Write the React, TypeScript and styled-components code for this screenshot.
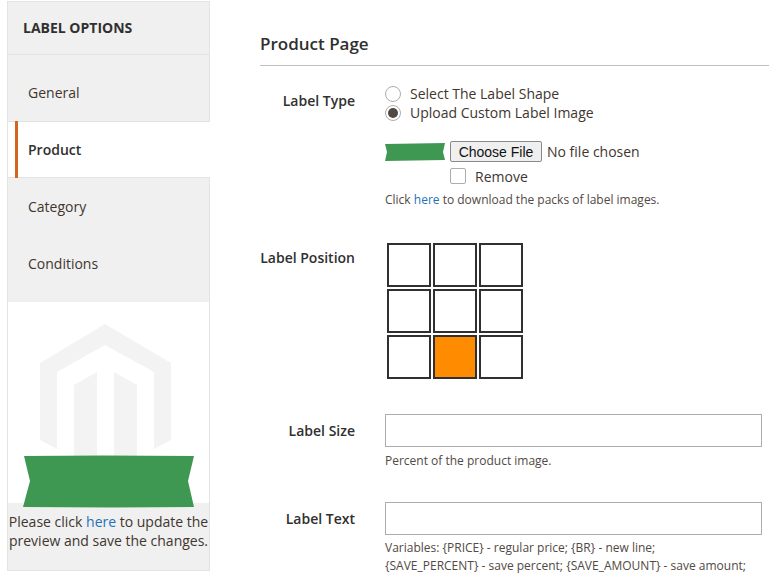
import React from 'react';
import styled, { createGlobalStyle } from 'styled-components';

const GlobalStyle = createGlobalStyle`
html, body {
    margin: 0;
    padding: 0;
    background: #fff;
    overflow: hidden;
}
body {
    font-family: "Open Sans", "Liberation Sans", sans-serif;
    font-size: 14px;
    color: #41362f;
}
`;

const Page = styled.div`
display: flex;
align-items: flex-start;
width: 769px;
height: 575px;
overflow: hidden;
padding: 1px 0 0 7px;
box-sizing: border-box;
`;

const Sidebar = styled.aside`
position: relative;
width: 203px;
height: 570px;
flex: none;
box-sizing: border-box;
border: 1px solid #e3e3e3;
display: flex;
flex-direction: column;
background: #fff;
`;

const SidebarTitle = styled.div`
height: 53px;
flex: none;
box-sizing: border-box;
padding: 0 0 2px 15px;
display: flex;
align-items: center;
background: #f0f0f0;
border-bottom: 1px solid #e3e3e3;
font-weight: 700;
font-size: 14px;
color: #303030;
text-transform: uppercase;
`;

const NavList = styled.nav`
display: flex;
flex-direction: column;
padding: 9px 0;
background: #f0f0f0;
height: 247px;
box-sizing: border-box;
flex: none;
`;

const NavItem = styled.div<{ $active?: boolean }>`
position: relative;
height: 57px;
flex: none;
box-sizing: border-box;
display: flex;
align-items: center;
padding-left: 20px;
font-size: 14px;
font-weight: ${p => (p.$active ? 600 : 400)};
color: ${p => (p.$active ? '#303030' : '#41362f')};
background: ${p => (p.$active ? '#fff' : 'transparent')};
border-top: ${p => (p.$active ? '1px solid #e3e3e3' : 'none')};
border-bottom: ${p => (p.$active ? '1px solid #e3e3e3' : 'none')};
margin-right: ${p => (p.$active ? '-1px' : '0')};
&::before {
    content: "";
    display: ${p => (p.$active ? 'block' : 'none')};
    position: absolute;
    left: 7px;
    top: -1px;
    bottom: -1px;
    width: 3px;
    background: #d0661f;
}
`;

const Preview = styled.div`
flex: 1;
display: flex;
flex-direction: column;
`;

const PreviewImage = styled.div`
height: 201px;
flex: none;
box-sizing: border-box;
padding: 22px 0 0 32px;
background: #fff;
`;

const LogoMark = styled.svg`
display: block;
width: 131px;
height: 132px;
`;

const Ribbon = styled.svg`
position: absolute;
left: 15px;
top: 453px;
width: 172px;
height: 53px;
`;

const PreviewNote = styled.div`
flex: 1;
background: #f0f0f0;
padding-top: 9px;
text-align: center;
font-size: 14px;
line-height: 19px;
color: #41362f;
white-space: nowrap;
`;

const Link = styled.a`
color: #1f72b8;
text-decoration: none;
`;

const Main = styled.main`
width: 509px;
margin-left: 50px;
flex: none;
display: flex;
flex-direction: column;
`;

const SectionTitle = styled.h2`
margin: 0;
height: 65px;
box-sizing: border-box;
padding-top: 33px;
border-bottom: 1px solid #c4c1bb;
font-size: 17px;
line-height: 20px;
font-weight: 600;
color: #303030;
flex: none;
`;

const FormRow = styled.div<{ $top: number }>`
display: grid;
grid-template-columns: 95px 377px;
column-gap: 30px;
margin-top: ${p => p.$top}px;
`;

const FieldLabel = styled.label<{ $pad: number }>`
text-align: right;
font-weight: 600;
font-size: 14px;
line-height: 19px;
color: #303030;
padding-top: ${p => p.$pad}px;
white-space: nowrap;
`;

const Field = styled.div`
display: flex;
flex-direction: column;
min-width: 0;
`;

const RadioLine = styled.label`
display: flex;
align-items: center;
height: 19px;
font-size: 14px;
color: #41362f;
`;

const Radio = styled.input.attrs({ type: 'radio' })`
appearance: none;
width: 16px;
height: 16px;
margin: 0 9px 0 0;
border: 1px solid #adadad;
border-radius: 50%;
background: #fff;
box-sizing: border-box;
position: relative;
&:checked::after {
    content: "";
    position: absolute;
    left: 2px;
    top: 2px;
    width: 10px;
    height: 10px;
    border-radius: 50%;
    background: #514943;
}
`;

const UploadRow = styled.div`
display: flex;
align-items: center;
margin-top: 19px;
height: 21px;
`;

const Swatch = styled.svg`
width: 60px;
height: 18px;
margin-right: 5px;
flex: none;
`;

const FileInput = styled.input.attrs({ type: 'file' })`
font-family: "Open Sans", sans-serif;
font-size: 14px;
color: #41362f;
width: 240px;
&::file-selector-button {
    font-family: "Liberation Sans", Arial, sans-serif;
    font-size: 14px;
    color: #111;
    width: 92px;
    height: 21px;
    padding: 0;
    margin-right: 5px;
    background: #efefef;
    border: 1px solid #8a8a8a;
    border-radius: 2px;
}
`;

const RemoveLine = styled.label`
display: flex;
align-items: center;
margin: 6px 0 0 65px;
height: 16px;
font-size: 14px;
`;

const Checkbox = styled.input.attrs({ type: 'checkbox' })`
appearance: none;
width: 16px;
height: 16px;
margin: 0 9px 0 0;
border: 1px solid #adadad;
border-radius: 2px;
background: #fff;
box-sizing: border-box;
`;

const Note = styled.div<{ $top: number }>`
margin-top: ${p => p.$top}px;
font-size: 12px;
line-height: 18px;
color: #514943;
white-space: nowrap;
`;

const PositionGrid = styled.div`
display: grid;
grid-template-columns: repeat(3, 44px);
grid-auto-rows: 44px;
gap: 2px;
margin-left: 2px;
`;

const PositionCell = styled.div<{ $on?: boolean }>`
box-sizing: border-box;
border: 2px solid #303030;
background: ${p => (p.$on ? '#ff8c00' : '#fff')};
`;

const TextInput = styled.input`
width: 377px;
height: 33px;
box-sizing: border-box;
border: 1px solid #adadad;
background: #fff;
padding: 0 10px;
outline: none;
`;

const navItems = ['General', 'Product', 'Category', 'Conditions'];

const App: React.FC = () => {
    return (
        <>
            <GlobalStyle />
            <Page>
                <Sidebar>
                    <SidebarTitle>Label Options</SidebarTitle>
                    <NavList>
                        {navItems.map(item => (
                            <NavItem key={item} $active={item === 'Product'}>{item}</NavItem>
                        ))}
                    </NavList>
                    <Preview>
                        <PreviewImage>
                            <LogoMark viewBox="0 0 131 132">
                                <path
                                    fill="#f3f3f3"
                                    d="M65 0L131 39V116L114 125V48L65 21L17 48V125L0 116V39Z"
                                />
                                <path fill="#f3f3f3" d="M34 61L57 48V132H34Z" />
                                <path fill="#f3f3f3" d="M74 48L97 61V132H74Z" />
                            </LogoMark>
                        </PreviewImage>
                        <PreviewNote>
                            Please click <Link href="#">here</Link> to update the<br />
                            preview and save the changes.
                        </PreviewNote>
                    </Preview>
                    <Ribbon viewBox="0 0 172 53">
                        <path
                            fill="#3f9852"
                            d="M1 1L80 0.5L171 1L165 26L171 52L90 52.5L0 52L7 26Z"
                        />
                    </Ribbon>
                </Sidebar>
                <Main>
                    <SectionTitle>Product Page</SectionTitle>
                    <FormRow $top={18}>
                        <FieldLabel $pad={7}>Label Type</FieldLabel>
                        <Field>
                            <RadioLine><Radio name="labelType" />Select The Label Shape</RadioLine>
                            <RadioLine><Radio name="labelType" defaultChecked />Upload Custom Label Image</RadioLine>
                            <UploadRow>
                                <Swatch viewBox="0 0 60 18">
                                    <path fill="#3f9852" d="M0 1L60 0L58 9L60 17L0 18L2 9Z" />
                                </Swatch>
                                <FileInput />
                            </UploadRow>
                            <RemoveLine><Checkbox />Remove</RemoveLine>
                            <Note $top={7}>
                                Click <Link href="#">here</Link> to download the packs of label images.
                            </Note>
                        </Field>
                    </FormRow>
                    <FormRow $top={34}>
                        <FieldLabel $pad={5}>Label Position</FieldLabel>
                        <PositionGrid>
                            {Array.from({ length: 9 }).map((_, i) => (
                                <PositionCell key={i} $on={i === 7} />
                            ))}
                        </PositionGrid>
                    </FormRow>
                    <FormRow $top={35}>
                        <FieldLabel $pad={7}>Label Size</FieldLabel>
                        <Field>
                            <TextInput />
                            <Note $top={5}>Percent of the product image.</Note>
                        </Field>
                    </FormRow>
                    <FormRow $top={32}>
                        <FieldLabel $pad={7}>Label Text</FieldLabel>
                        <Field>
                            <TextInput />
                            <Note $top={4}>
                                Variables: {'{PRICE}'} - regular price; {'{BR}'} - new line;<br />
                                {'{SAVE_PERCENT}'} - save percent; {'{SAVE_AMOUNT}'} - save amount;
                            </Note>
                        </Field>
                    </FormRow>
                </Main>
            </Page>
        </>
    );
};

export default App;
